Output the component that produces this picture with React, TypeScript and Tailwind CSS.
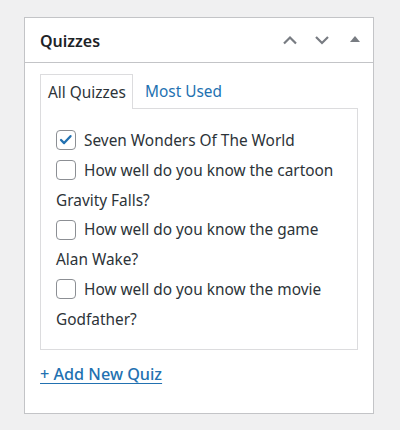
import React from "react";

const items: { label: string; checked: boolean }[] = [
  { label: "Seven Wonders Of The World", checked: true },
  { label: "How well do you know the cartoon Gravity Falls?", checked: false },
  { label: "How well do you know the game Alan Wake?", checked: false },
  { label: "How well do you know the movie Godfather?", checked: false },
];

function Box({ checked }: { checked: boolean }) {
  return (
    <span className="inline-block align-middle w-[20px] h-[20px] rounded-[4px] border border-[#8c8f94] bg-white relative mr-[8px] -mt-[3px]">
      {checked && (
        <svg viewBox="0 0 20 20" className="absolute left-[0px] top-[0px] w-[18px] h-[18px]">
          <path d="M4.5 10l3.4 3.4L15 5.8" fill="none" stroke="#2271b1" strokeWidth="2.6" strokeLinecap="round" strokeLinejoin="round" />
        </svg>
      )}
    </span>
  );
}

export default function App() {
  return (
    <div className="w-[400px] h-[430px] bg-[#f0f0f1] pt-[17px] pl-[24px]" style={{ fontFamily: '"Noto Sans", sans-serif' }}>
      <div className="w-[350px] h-[397px] bg-white border border-[#c3c4c7]">
        <div className="h-[45px] border-b border-[#c3c4c7] flex items-center pl-[15px] pr-[12px]">
          <div className="text-[16px] font-semibold text-[#1d2327] flex-1 pt-[2px]">Quizzes</div>
          <div className="flex items-center">
            <svg width="16" height="12" viewBox="0 0 16 12" className="mr-[16px]">
              <path d="M2 9.5l6-6 6 6" fill="none" stroke="#787c82" strokeWidth="2.2" />
            </svg>
            <svg width="16" height="12" viewBox="0 0 16 12" className="mr-[20px]">
              <path d="M2 3l6 6 6-6" fill="none" stroke="#787c82" strokeWidth="2.2" />
            </svg>
            <svg width="10" height="8" viewBox="0 0 10 8" className="mr-[1px] -mt-[2px]">
              <path d="M0 7L5 1L10 7Z" fill="#787c82" />
            </svg>
          </div>
        </div>
        <div className="px-[15px] pt-[11px]">
          <div className="flex text-[15.4px]">
            <div className="h-[35px] w-[93px] pl-[7px] border border-[#dcdcde] border-b-0 bg-white text-[#2c3338] flex items-center relative z-10 -mb-px pt-[1px]">
              All Quizzes
            </div>
            <div className="h-[34px] pl-[12px] text-[#2271b1] flex items-center pt-[1px]">Most Used</div>
          </div>
          <div className="border border-[#dcdcde] h-[242px] pl-[15px] pr-[10px] pt-[17px] text-[15.4px] text-[#2c3338]">
            {items.map((it, i) => (
              <div key={i} className="leading-[29.8px]">
                <Box checked={it.checked} />
                {it.label}
              </div>
            ))}
          </div>
          <div className="mt-[12px]">
            <a className="text-[16.2px] font-medium text-[#2271b1] underline underline-offset-[3px]">+ Add New Quiz</a>
          </div>
        </div>
      </div>
    </div>
  );
}
